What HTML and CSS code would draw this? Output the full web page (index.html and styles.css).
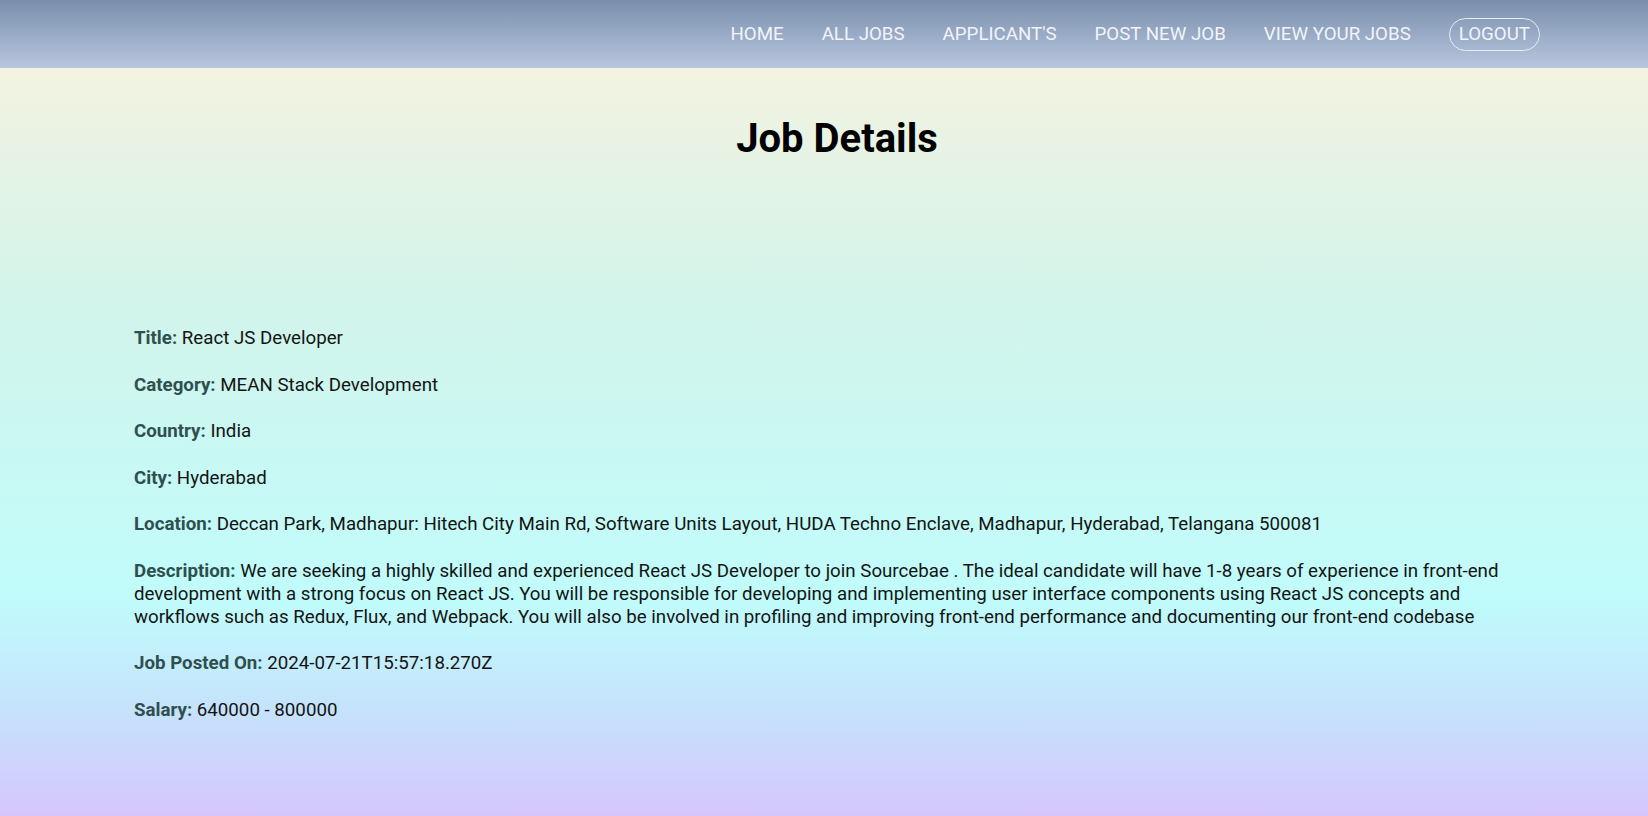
FILE: index.html
```
<!DOCTYPE html>
<html lang="en">
<head>
<meta charset="utf-8">
<title>Job Details</title>
<link rel="stylesheet" href="styles.css">
</head>
<body>
<header class="navbar">
  <nav class="nav-links">
    <a class="nav-link" href="#">HOME</a>
    <a class="nav-link" href="#">ALL JOBS</a>
    <a class="nav-link" href="#">APPLICANT'S</a>
    <a class="nav-link" href="#">POST NEW JOB</a>
    <a class="nav-link" href="#">VIEW YOUR JOBS</a>
    <a class="nav-link logout" href="#">LOGOUT</a>
  </nav>
</header>
<main class="page">
  <h1 class="page-title">Job Details</h1>
  <section class="details">
    <p class="row"><span class="label">Title:</span> React JS Developer</p>
    <p class="row"><span class="label">Category:</span> MEAN Stack Development</p>
    <p class="row"><span class="label">Country:</span> India</p>
    <p class="row"><span class="label">City:</span> Hyderabad</p>
    <p class="row"><span class="label">Location:</span> Deccan Park, Madhapur: Hitech City Main Rd, Software Units Layout, HUDA Techno Enclave, Madhapur, Hyderabad, Telangana 500081</p>
    <p class="row"><span class="label">Description:</span> We are seeking a highly skilled and experienced React JS Developer to join Sourcebae . The ideal candidate will have 1-8 years of experience in front-end development with a strong focus on React JS. You will be responsible for developing and implementing user interface components using React JS concepts and workflows such as Redux, Flux, and Webpack. You will also be involved in profiling and improving front-end performance and documenting our front-end codebase</p>
    <p class="row"><span class="label">Job Posted On:</span> 2024-07-21T15:57:18.270Z</p>
    <p class="row"><span class="label">Salary:</span> 640000 - 800000</p>
  </section>
</main>
</body>
</html>
```
FILE: styles.css
```
* {
  box-sizing: border-box;
}

html, body {
  margin: 0;
  padding: 0;
  height: 100%;
}

body {
  font-family: Roboto, "Liberation Sans", sans-serif;
  display: flex;
  flex-direction: column;
  min-height: 816px;
}

.navbar {
  height: 68px;
  flex: 0 0 68px;
  background: linear-gradient(to bottom, #7a8eab 0%, #9badc8 55%, #b9c7de 100%);
  display: flex;
  align-items: center;
  justify-content: flex-end;
  padding-right: 108px;
}

.nav-links {
  display: flex;
  align-items: center;
  gap: 38px;
}

.nav-link {
  color: #f2f4f8;
  text-decoration: none;
  font-size: 18.72px;
  line-height: 22px;
}

.logout {
  border: 1px solid #e8ecf3;
  border-radius: 17px;
  height: 33px;
  padding: 0 9px;
  display: flex;
  align-items: center;
}

.page {
  flex: 1 1 auto;
  background: linear-gradient(to bottom, #f3f3e1 0%, #d3f4ea 30%, #c0fcfb 71%, #c5e4fc 85%, #d5c6fc 100%);
  padding: 0 108px 40px 134px;
}

.page-title {
  margin: 47px 0 0 0;
  font-size: 40px;
  font-weight: 700;
  line-height: 47px;
  color: #000;
  text-align: center;
}

.details {
  margin-top: 165px;
}

.row {
  margin: 0 0 23.5px 0;
  font-size: 18.72px;
  line-height: 23px;
  color: #141414;
}

.label {
  font-weight: 700;
  color: #2f4f4f;
}
```
